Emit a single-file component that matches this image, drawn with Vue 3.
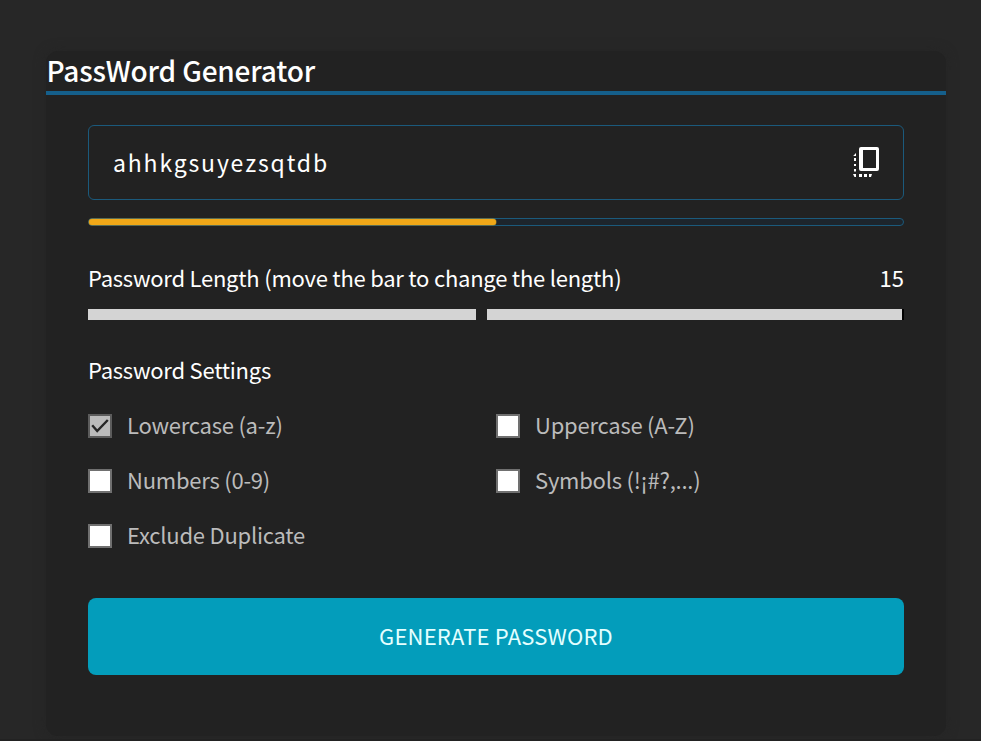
<script setup>
import { ref } from 'vue'

const password = ref('ahhkgsuyezsqtdb')
const length = ref(15)
const options = ref([
  { id: 'lowercase', label: 'Lowercase (a-z)', checked: true },
  { id: 'uppercase', label: 'Uppercase (A-Z)', checked: false },
  { id: 'numbers', label: 'Numbers (0-9)', checked: false },
  { id: 'symbols', label: 'Symbols (!¡#?,...)', checked: false },
  { id: 'exclude', label: 'Exclude Duplicate', checked: false }
])
</script>

<template>
  <div class="page">
    <main class="card">
      <h1 class="title"><span class="title-text">PassWord Generator</span></h1>
      <div class="content">
        <div class="password-box">
          <span class="password">{{ password }}</span>
          <svg class="copy" width="28" height="33" viewBox="0 0 28 33">
            <path fill="#fff" fill-rule="evenodd" d="M9 1h16q2 0 2 2v20q0 2-2 2H9q-2 0-2-2V3q0-2 2-2zM11 4v18h13V4z" />
            <path fill="#fff" d="M4 7v3H1.2zM2 12h2v3H2zM2 18h2v2H2zM2 23h2v2.5H2zM1 28h3v3H2.5zM7 28h3v3H7zM12 28h3v3h-3zM17 28h3l-1 3h-2z" />
          </svg>
        </div>
        <div class="strength"><div class="strength-fill"></div></div>
        <div class="length-row">
          <span class="length-label">Password Length (move the bar to change the length)</span>
          <span class="length-value">{{ length }}</span>
        </div>
        <div class="slider">
          <div class="track-before"></div>
          <div class="thumb"></div>
          <div class="track-after"></div>
        </div>
        <h2 class="settings-title"><span>Password Settings</span></h2>
        <div class="options">
          <label v-for="o in options" :key="o.id" class="option">
            <span class="box" :class="{ checked: o.checked }">
              <svg v-if="o.checked" width="20" height="20" viewBox="0 0 20 20">
                <path d="M2.2 9.3 7.2 15 17.8 4" fill="none" stroke="#262626" stroke-width="2.4" />
              </svg>
            </span>
            <span class="option-label">{{ o.label }}</span>
          </label>
        </div>
        <button class="generate"><span>GENERATE PASSWORD</span></button>
      </div>
    </main>
  </div>
</template>

<style>
body {
  margin: 0;
  background: #272727;
}
</style>

<style scoped>
.page {
  box-sizing: border-box;
  height: 741px;
  padding: 51px 35px 0 46px;
  overflow: hidden;
  background: #272727;
  border-bottom: 2px solid #222;
  color: #fff;
  font-family: "Noto Sans CJK JP", "Noto Sans", sans-serif;
  font-size: 22px;
  letter-spacing: -0.23px;
}
.card {
  height: 685px;
  background: #222;
  border-radius: 12px;
  box-shadow: 0 0 12px #252525;
}
.title {
  box-sizing: border-box;
  height: 44px;
  margin: 0;
  padding-left: 0.5px;
  border-bottom: 4px solid #155f8b;
  font-size: 28px;
  font-weight: 500;
  letter-spacing: -0.17px;
  line-height: 38px;
}
.content {
  padding: 30px 42px 0;
}
.password-box {
  box-sizing: border-box;
  display: flex;
  align-items: center;
  justify-content: space-between;
  height: 75px;
  padding: 0 23px 0 24px;
  border: 1px solid #1b5a7c;
  border-radius: 6px;
}
.password {
  padding-bottom: 2px;
  font-size: 23px;
  letter-spacing: 1.84px;
  line-height: 30px;
}
.strength {
  box-sizing: border-box;
  height: 8px;
  margin-top: 18px;
  border: 1px solid #1b5a7c;
  border-radius: 4px;
  background: #1d252c;
}
.strength-fill {
  width: 50%;
  height: 6px;
  border-radius: 3px;
  background: #f0a818;
  box-shadow: 0 0 0 0.5px #98802e;
}
.length-row {
  display: flex;
  justify-content: space-between;
  margin-top: 34px;
  line-height: 34px;
}
.length-value {
  letter-spacing: 0;
}
.slider {
  display: flex;
  height: 11px;
  margin-top: 15px;
}
.track-before {
  width: 388px;
  background: #d4d4d4;
}
.thumb {
  width: 11px;
}
.track-after {
  flex: 1;
  background: #d4d4d4;
  border-right: 2px solid #000;
}
.settings-title {
  margin: 32px 0 0;
  font-size: 22px;
  font-weight: 400;
  line-height: 34px;
}
.options {
  display: grid;
  grid-template-columns: 1fr 1fr;
  grid-auto-rows: 24px;
  row-gap: 31px;
  margin-top: 28px;
}
.option {
  display: flex;
  align-items: center;
  gap: 15px;
  color: #bbb;
  line-height: 24px;
}
.option-label {
  padding-bottom: 4px;
}
.box {
  box-sizing: border-box;
  width: 24px;
  height: 24px;
  border: 2px solid #707070;
  background: #fff;
}
.box.checked {
  border-color: #5c5c5c;
  background: #bbb;
}
.box svg {
  display: block;
}
.generate {
  display: block;
  width: 100%;
  height: 77px;
  margin: 50px 0 0;
  padding: 0 0 4px;
  border: 0;
  border-radius: 8px;
  background: #039dbb;
  color: #e4ffff;
  font: inherit;
  letter-spacing: 0.2px;
}
</style>
